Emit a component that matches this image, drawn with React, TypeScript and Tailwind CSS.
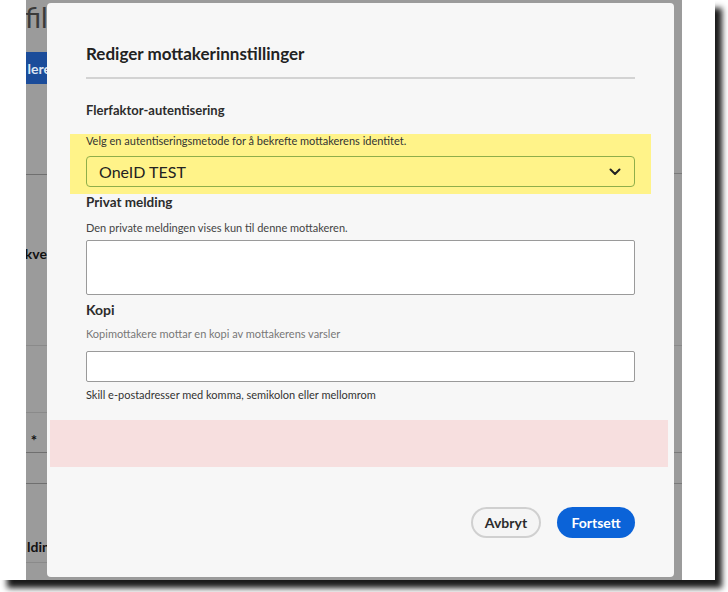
import React from "react";

function Chevron() {
  return (
    <svg width="12" height="8" viewBox="0 0 12 8" className="block">
      <path d="M1.5 1.5 L6 6 L10.5 1.5" fill="none" stroke="#222" strokeWidth="2" strokeLinecap="round" strokeLinejoin="round" />
    </svg>
  );
}

export default function App() {
  return (
    <div className="w-[728px] h-[592px] bg-white overflow-hidden" style={{ fontFamily: "Lato, 'Liberation Sans', sans-serif" }}>
      <div className="w-[715px] h-[580px] bg-white flex shadow-[7px_8px_6px_rgba(0,0,0,0.9)]">
        <div className="w-[26px] shrink-0" />
        {/* dimmed page */}
        <div className="w-[656px] h-[580px] bg-[#9b9b9b] flex shrink-0">
          {/* left strip */}
          <div className="w-[21px] h-full overflow-hidden flex flex-col shrink-0">
            <div className="h-[52px] relative">
              <div className="absolute left-[-1px] top-[3px] text-[28px] leading-[28px] text-[#3a3a3a] whitespace-nowrap">file</div>
            </div>
            <div className="h-[32px] bg-[#1b4c9a] flex items-center justify-end overflow-hidden">
              <span className="text-[14px] font-bold text-[#dde5f2] whitespace-nowrap -mr-[4px]">lere</span>
            </div>
            <div className="h-[90px]" />
            <div className="h-px bg-[#6f6f6f]" />
            <div className="h-[70px]" />
            <div className="h-[16px] flex items-center justify-end overflow-hidden">
              <span className="text-[14px] font-bold text-[#111] whitespace-nowrap">kve</span>
            </div>
            <div className="h-[84px]" />
            <div className="h-px bg-[#8a8a8a]" />
            <div className="h-[66px]" />
            <div className="h-px bg-[#8a8a8a]" />
            <div className="h-[39px] flex items-center justify-center pt-[16px] pr-[5px]">
              <span className="text-[15px] leading-[15px] font-bold text-[#111]">*</span>
            </div>
            <div className="h-px bg-[#6f6f6f]" />
            <div className="h-[30px]" />
            <div className="h-px bg-[#6f6f6f]" />
            <div className="h-[54px]" />
            <div className="h-[16px] flex items-center justify-end overflow-hidden">
              <span className="text-[14px] font-bold text-[#111] whitespace-nowrap -mr-[3px]">ldin</span>
            </div>
            <div className="h-[8px]" />
            <div className="h-px bg-[#8a8a8a]" />
          </div>

          {/* modal column */}
          <div className="w-[627px] shrink-0 pt-[3px]">
            <div className="h-[574px] bg-[#f7f7f7] rounded-[4px] flex flex-col px-[39px] relative">
              <div className="pt-[40px] text-[17px] font-bold text-[#222] leading-[22px]">Rediger mottakerinnstillinger</div>
              <div className="mt-[12px] h-[2px] bg-[#d3d3d3]" />
              <div className="mt-[22px] text-[13px] font-bold text-[#2c2c2c] leading-[18px]">Flerfaktor-autentisering</div>

              {/* highlighted block */}
              <div className="mt-[15px] -mx-[16px] bg-[#fff389] px-[16px] pt-0 pb-[7px]">
                <div className="text-[11px] leading-[14px] text-[#333]">Velg en autentiseringsmetode for å bekrefte mottakerens identitet.</div>
                <div className="mt-[8px] h-[31px] border border-[#8fae4a] rounded-[4px] flex items-center justify-between pl-[12px] pr-[13px]">
                  <span className="text-[16px] text-[#222]">OneID TEST</span>
                  <Chevron />
                </div>
              </div>

              <div className="-mt-[1px] text-[13.5px] font-bold text-[#2c2c2c] leading-[18px]">Privat melding</div>
              <div className="mt-[10px] text-[11px] leading-[14px] text-[#444]">Den private meldingen vises kun til denne mottakeren.</div>
              <div className="mt-[5px] h-[55px] bg-white border border-[#9a9a9a] rounded-[2px]" />

              <div className="mt-[5px] text-[14px] font-bold text-[#2c2c2c] leading-[20px]">Kopi</div>
              <div className="mt-[7px] text-[11px] leading-[14px] text-[#777]">Kopimottakere mottar en kopi av mottakerens varsler</div>
              <div className="mt-[10px] h-[31px] bg-white border border-[#9a9a9a] rounded-[2px]" />
              <div className="mt-[6px] text-[11px] leading-[14px] text-[#333]">Skill e-postadresser med komma, semikolon eller mellomrom</div>

              <div className="mt-[18px] -mx-[36px] mr-[-33px] h-[47px] bg-[#f7dfdf]" />

              <div className="mt-[40px] flex justify-end gap-[16px]">
                <button className="h-[31px] w-[70px] rounded-full border-2 border-[#d0d0d0] bg-[#f5f5f5] text-[14px] font-bold text-[#2c2c2c]">Avbryt</button>
                <button className="h-[31px] w-[78px] rounded-full bg-[#0b63d8] text-[14px] font-bold text-white">Fortsett</button>
              </div>
            </div>
          </div>

          {/* right strip */}
          <div className="w-[8px] h-full flex flex-col shrink-0">
            <div className="h-[173px]" />
            <div className="h-px bg-[#7a7a7a]" />
            <div className="h-[171px]" />
            <div className="h-px bg-[#8a8a8a]" />
            <div className="h-[106px]" />
            <div className="h-px bg-[#7a7a7a]" />
            <div className="h-[30px]" />
            <div className="h-px bg-[#7a7a7a]" />
          </div>
        </div>
      </div>
    </div>
  );
}
